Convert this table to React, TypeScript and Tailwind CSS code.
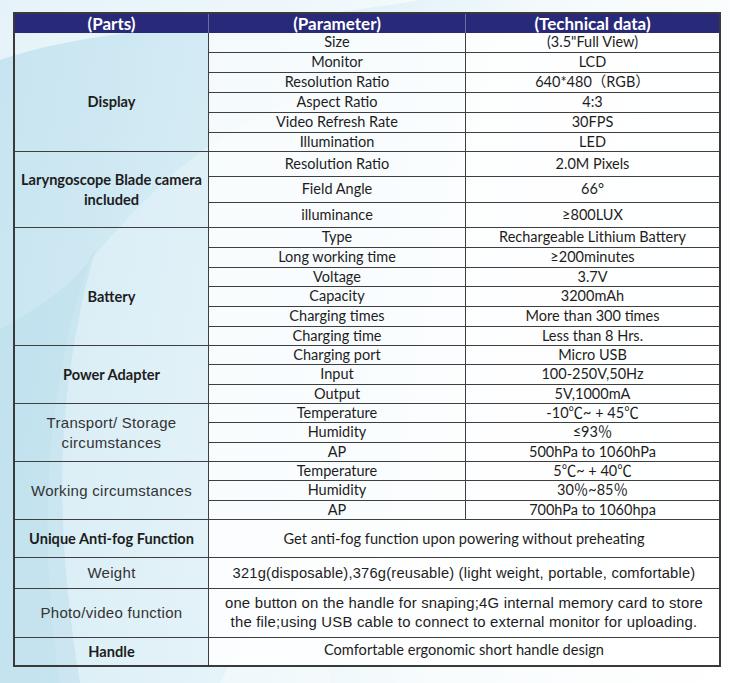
import * as React from "react";

type Sub = { param: string; data: string; h: string };
type Group = {
  part: string;
  lines?: string[];
  arial?: boolean;
  shift?: boolean;
  rows: Sub[];
};

const groups: Group[] = [
  {
    part: "Display",
    shift: true,
    rows: [
      { param: "Size", data: "(3.5\"Full View)", h: "h-[20px]" },
      { param: "Monitor", data: "LCD", h: "h-[20px]" },
      { param: "Resolution Ratio", data: "640*480\uFF08RGB\uFF09", h: "h-[20px]" },
      { param: "Aspect Ratio", data: "4:3", h: "h-[20px]" },
      { param: "Video Refresh Rate", data: "30FPS", h: "h-[20px]" },
      { param: "Illumination", data: "LED", h: "h-[18px]" },
    ],
  },
  {
    part: "Laryngoscope Blade camera included",
    lines: ["Laryngoscope Blade camera", "included"],
    rows: [
      { param: "Resolution Ratio", data: "2.0M Pixels", h: "h-[25px]" },
      { param: "Field Angle", data: "66°", h: "h-[26px]" },
      { param: "illuminance", data: "≥800LUX", h: "h-[24px]" },
    ],
  },
  {
    part: "Battery",
    shift: true,
    rows: [
      { param: "Type", data: "Rechargeable Lithium Battery", h: "h-[20px]" },
      { param: "Long working time", data: "≥200minutes", h: "h-[20px]" },
      { param: "Voltage", data: "3.7V", h: "h-[19px]" },
      { param: "Capacity", data: "3200mAh", h: "h-[20px]" },
      { param: "Charging times", data: "More than 300 times", h: "h-[20px]" },
      { param: "Charging time", data: "Less than 8 Hrs.", h: "h-[18px]" },
    ],
  },
  {
    part: "Power Adapter",
    rows: [
      { param: "Charging port", data: "Micro USB", h: "h-[19px]" },
      { param: "Input", data: "100-250V,50Hz", h: "h-[20px]" },
      { param: "Output", data: "5V,1000mA", h: "h-[18px]" },
    ],
  },
  {
    part: "Transport/ Storage circumstances",
    lines: ["Transport/ Storage", "circumstances"],
    arial: true,
    rows: [
      { param: "Temperature", data: "-10\u2103~ + 45\u2103", h: "h-[19px]" },
      { param: "Humidity", data: "≤93\uFF05", h: "h-[20px]" },
      { param: "AP", data: "500hPa to 1060hPa", h: "h-[18px]" },
    ],
  },
  {
    part: "Working circumstances",
    arial: true,
    rows: [
      { param: "Temperature", data: "5\u2103~ + 40\u2103", h: "h-[19px]" },
      { param: "Humidity", data: "30\uFF05~85\uFF05", h: "h-[20px]" },
      { param: "AP", data: "700hPa to 1060hpa", h: "h-[18px]" },
    ],
  },
];

const calibri = "font-['Lato','Noto_Sans_CJK_SC',sans-serif]";
const arial = "font-['Liberation_Sans','Noto_Sans_CJK_SC',sans-serif]";

function PartCell({ group }: { group: Group }) {
  const text = group.lines
    ? group.lines.map((l, i) => (
        <React.Fragment key={i}>
          {i > 0 && <br />}
          {l}
        </React.Fragment>
      ))
    : group.part;
  return (
    <div
      className={`flex w-[194px] shrink-0 items-center justify-center border-r border-[#3f3f3f] text-center whitespace-nowrap ${
        group.shift ? "pt-5" : ""
      }`}
    >
      {group.arial ? (
        <span className={`${arial} text-[15px] leading-[20px] tracking-[0.3px] text-[#333]`}>
          {text}
        </span>
      ) : (
        <span className={`${calibri} text-[14.6px] font-bold leading-[20px] text-[#1d1d1d]`}>
          {text}
        </span>
      )}
    </div>
  );
}

function SpecGroup({ group }: { group: Group }) {
  return (
    <div className="flex border-b border-[#3f3f3f]">
      <PartCell group={group} />
      <div className="flex flex-1 flex-col">
        {group.rows.map((r, i) => (
          <div
            key={i}
            className={`flex ${r.h} ${
              i < group.rows.length - 1 ? "border-b border-[#3f3f3f]" : ""
            } ${calibri} text-[14.5px] leading-none text-[#1d1d1d]`}
          >
            <div className="flex w-[257px] shrink-0 items-center justify-center border-r border-[#3f3f3f] bg-white/75">
              {r.param}
            </div>
            <div className="flex flex-1 items-center justify-center bg-white/85">
              {r.data}
            </div>
          </div>
        ))}
      </div>
    </div>
  );
}

function WideRow({
  part,
  partClass,
  height,
  last,
  children,
}: {
  part: string;
  partClass: string;
  height: string;
  last?: boolean;
  children: React.ReactNode;
}) {
  return (
    <div className={`flex ${height} ${last ? "" : "border-b border-[#3f3f3f]"}`}>
      <div className="flex w-[194px] shrink-0 items-center justify-center border-r border-[#3f3f3f]">
        <span className={partClass}>{part}</span>
      </div>
      <div className="flex flex-1 flex-col items-center justify-center bg-white/85 text-center">
        {children}
      </div>
    </div>
  );
}

export default function App() {
  return (
    <div className="relative h-[683px] w-[730px] overflow-hidden bg-[linear-gradient(100deg,#c6e4f0_0%,#d9eef6_35%,#f4fafc_65%,#ffffff_100%)]">
      <svg
        className="pointer-events-none absolute inset-0"
        width="730"
        height="683"
        viewBox="0 0 730 683"
      >
        <path d="M0 60 C120 20 250 30 420 0 L0 0 Z" fill="#ffffff" opacity="0.55" />
        <path d="M90 260 C160 180 220 120 330 90 L330 683 L60 683 C40 560 40 400 90 260 Z" fill="#ffffff" opacity="0.25" />
        <path d="M0 330 C50 300 80 280 95 250 C60 380 50 500 80 683 L0 683 Z" fill="#b9deec" opacity="0.5" />
        <path d="M220 683 C260 600 330 560 460 540 L730 540 L730 683 Z" fill="#ffffff" opacity="0.35" />
      </svg>

      <div className="relative pl-[13px] pt-[12px]">
        <div className="w-[708px] border-2 border-[#3a3a3a]">
          <div
            className={`flex h-[19px] bg-[#29297a] ${calibri} text-[17px] font-bold leading-none text-white`}
          >
            <div className="flex w-[194px] shrink-0 items-center justify-center border-r border-[#6d6da3]">
              (Parts)
            </div>
            <div className="flex w-[257px] shrink-0 items-center justify-center border-r border-[#6d6da3]">
              (Parameter)
            </div>
            <div className="flex flex-1 items-center justify-center">(Technical data)</div>
          </div>

          {groups.map((g) => (
            <SpecGroup key={g.part} group={g} />
          ))}

          <WideRow
            part="Unique Anti-fog Function"
            partClass={`${calibri} text-[14.6px] font-bold text-[#1d1d1d]`}
            height="h-[38px]"
          >
            <span className={`${calibri} text-[14.6px] text-[#1d1d1d]`}>
              Get anti-fog function upon powering without preheating
            </span>
          </WideRow>

          <WideRow
            part="Weight"
            partClass={`${arial} text-[15px] tracking-[0.3px] text-[#333]`}
            height="h-[31px]"
          >
            <span className={`${arial} text-[14.7px] tracking-[0.2px] text-[#1d1d1d]`}>
              321g(disposable),376g(reusable) (light weight, portable, comfortable)
            </span>
          </WideRow>

          <WideRow
            part="Photo/video function"
            partClass={`${arial} text-[15px] tracking-[0.3px] text-[#333]`}
            height="h-[49px]"
          >
            <span className={`${arial} text-[14.9px] leading-[19px] tracking-[0.2px] text-[#1d1d1d]`}>
              one button on the handle for snaping;4G internal memory card to store
              <br />
              the file;using USB cable to connect to external monitor for uploading.
            </span>
          </WideRow>

          <WideRow
            part="Handle"
            partClass={`${calibri} text-[14.6px] font-bold text-[#1d1d1d]`}
            height="h-[27px]"
            last
          >
            <span className={`${calibri} -mt-1 text-[14.6px] text-[#1d1d1d]`}>
              Comfortable ergonomic short handle design
            </span>
          </WideRow>
        </div>
      </div>
    </div>
  );
}
